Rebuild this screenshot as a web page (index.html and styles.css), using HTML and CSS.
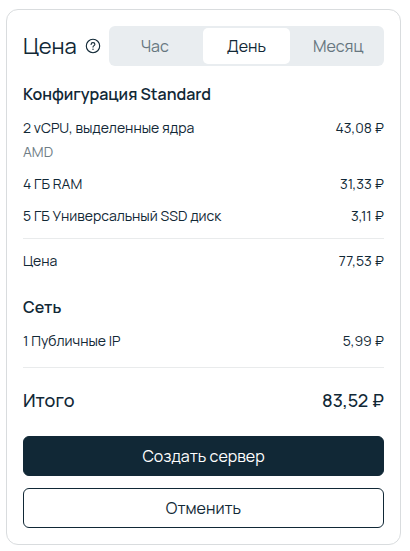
FILE: index.html
```
<!DOCTYPE html>
<html lang="ru">
<head>
  <meta charset="UTF-8">
  <meta name="viewport" content="width=device-width, initial-scale=1.0">
  <title>Создание сервера</title>
  <link rel="stylesheet" href="styles.css">
</head>
<body>

<form class="card">
  <div class="card-header">
    <h1 class="card-title">Цена</h1>
    <button type="button" class="help" aria-label="Подсказка">
      <svg width="16" height="16" viewBox="0 0 16 16" fill="none" stroke="currentColor" stroke-linecap="round" stroke-linejoin="round">
        <circle cx="8" cy="8" r="6.7" stroke-width="1.1"/>
        <path d="M6.1 6.5C6.1 5.3 6.9 4.6 8 4.6s1.9.7 1.9 1.7C9.9 7.6 8 7.7 8 9.1" stroke-width="1.1"/>
        <circle cx="8" cy="11.3" r=".7" fill="currentColor" stroke="none"/>
      </svg>
    </button>
    <div class="period" role="radiogroup" aria-label="Период">
      <input type="radio" id="hour" name="period" value="hour">
      <label for="hour">Час</label>
      <input type="radio" id="day" name="period" value="day" checked>
      <label for="day">День</label>
      <input type="radio" id="month" name="period" value="month">
      <label for="month">Месяц</label>
    </div>
  </div>

  <section class="group">
    <h2>Конфигурация Standard</h2>
    <div class="row">
      <div>2 vCPU, выделенные ядра<div class="muted">AMD</div></div>
      <div class="price">43,08 ₽</div>
    </div>
    <div class="row">
      <div>4 ГБ RAM</div>
      <div class="price">31,33 ₽</div>
    </div>
    <div class="row">
      <div>5 ГБ Универсальный SSD диск</div>
      <div class="price">3,11 ₽</div>
    </div>
    <div class="row subtotal">
      <div>Цена</div>
      <div class="price">77,53 ₽</div>
    </div>
  </section>

  <section class="group network">
    <h2>Сеть</h2>
    <div class="row">
      <div>1 Публичные IP</div>
      <div class="price">5,99 ₽</div>
    </div>
  </section>

  <div class="total">
    <div>Итого</div>
    <div class="price">83,52 ₽</div>
  </div>

  <div class="actions">
    <button type="submit" class="btn btn-primary">Создать сервер</button>
    <button type="button" class="btn">Отменить</button>
  </div>
</form>

</body>
</html>
```
FILE: styles.css
```
* {
  box-sizing: border-box;
}

body {
  margin: 0;
  padding: 9px 9px 6px 6px;
  background-color: #fff;
  color: #112836;
  font-family: Manrope, Inter, sans-serif;
  font-size: 14px;
  line-height: 24px;
}

h1, h2 {
  margin: 0;
}

button {
  font-family: inherit;
  color: inherit;
  cursor: pointer;
}

.card {
  padding: 16px;
  border: 1px solid #d9dcde;
  border-radius: 12px;
}

.card-header {
  display: flex;
  align-items: center;
  gap: 8px;
  margin-bottom: 16px;
}

.card-title {
  font-size: 22px;
  font-weight: 400;
}

.help {
  display: flex;
  padding: 0;
  border: none;
  background: none;
}

.period {
  flex: 1;
  display: flex;
  height: 40px;
  border-radius: 6px;
  background-color: #e9edf0;
}

.period input {
  position: absolute;
  opacity: 0;
}

.period label {
  flex: 1;
  margin: 2px;
  border-radius: 5px;
  color: #66767f;
  font-size: 16px;
  line-height: 36px;
  text-align: center;
  cursor: pointer;
}

.period input:checked + label {
  background-color: #fff;
  color: #112836;
}

.group h2 {
  margin-bottom: 10px;
  font-size: 16px;
  font-weight: 600;
}

.row, .total {
  display: flex;
  justify-content: space-between;
}

.row + .row {
  margin-top: 8px;
}

.price {
  white-space: nowrap;
}

.muted {
  color: #6f7d86;
}

.row.subtotal {
  margin-top: 10px;
  padding-top: 10px;
  border-top: 1px solid #e9ebec;
}

.network {
  margin-top: 22px;
}

.total {
  margin-top: 14px;
  padding-top: 20px;
  border-top: 1px solid #e9ebec;
  font-size: 18px;
  font-weight: 500;
}

.actions {
  display: flex;
  flex-direction: column;
  gap: 12px;
  margin-top: 24px;
}

.btn {
  height: 40px;
  border: 1px solid #112836;
  border-radius: 6px;
  background-color: #fff;
  font-size: 16px;
}

.btn-primary {
  background-color: #112836;
  color: #fff;
}
```
